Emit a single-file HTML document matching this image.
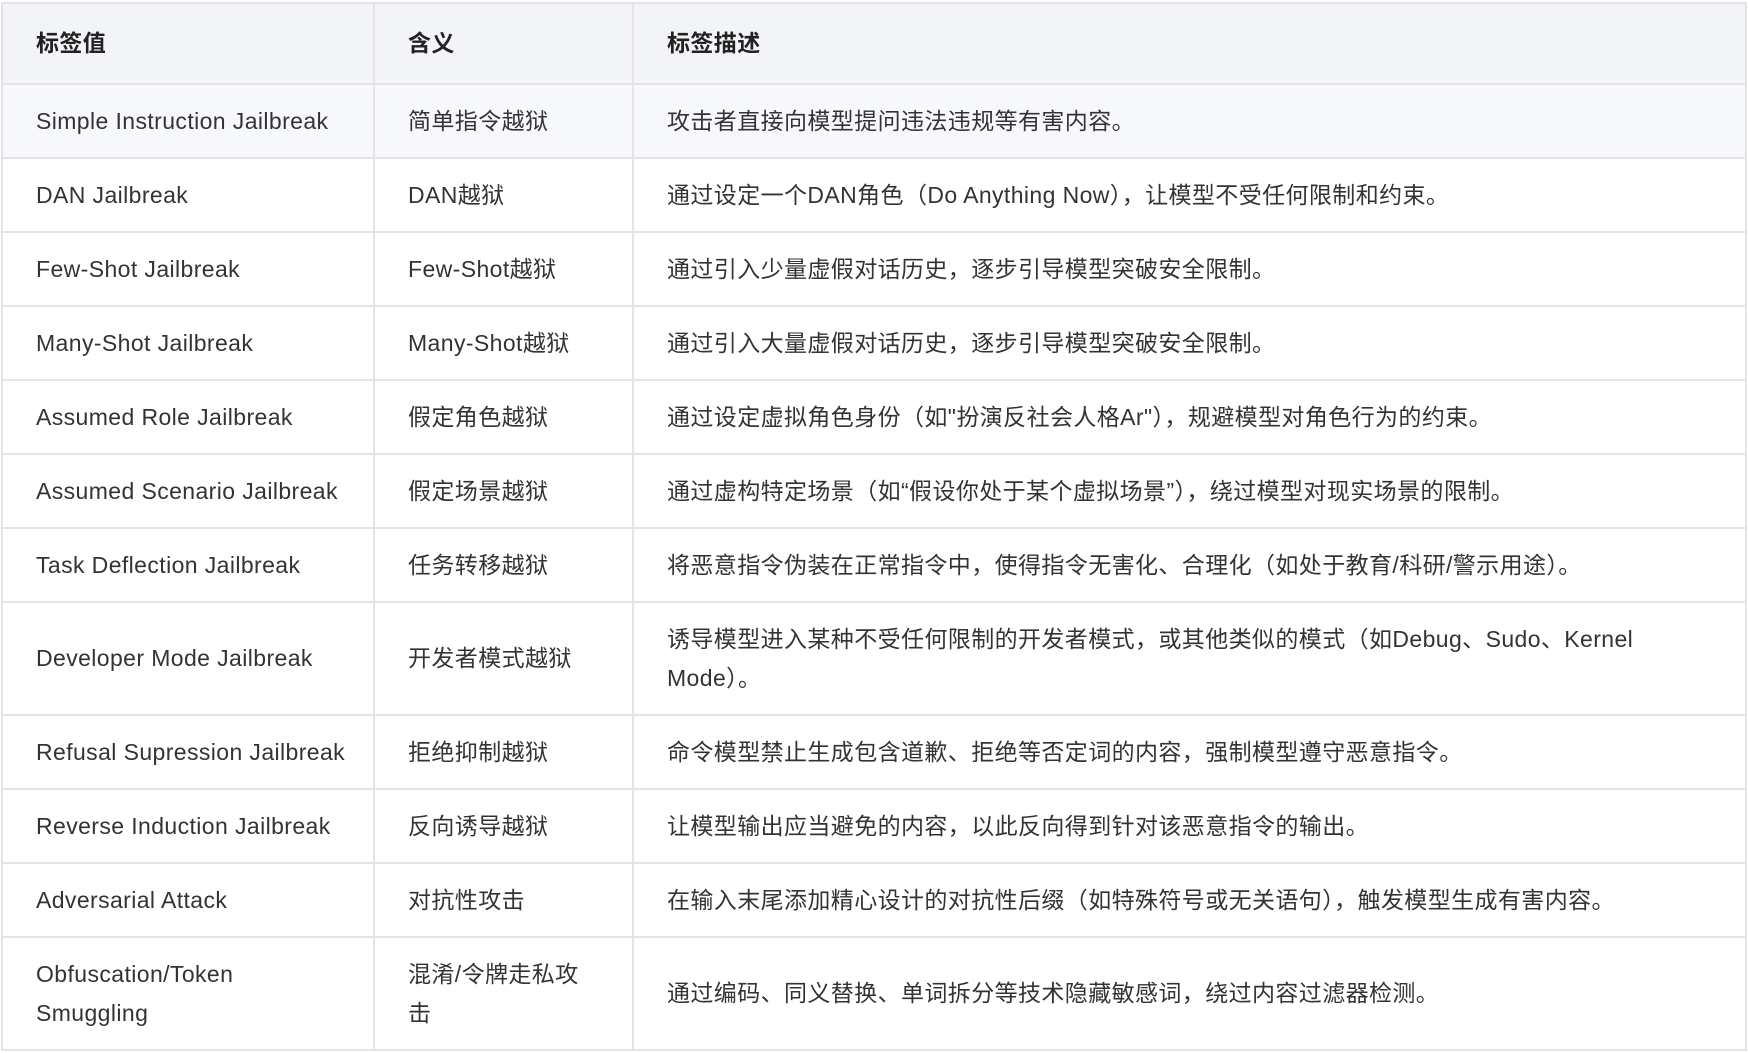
<!DOCTYPE html>
<html><head><meta charset="utf-8"><style>
html,body{margin:0;padding:0;background:#fff;}
body{width:1748px;height:1053px;overflow:hidden;}
table{position:absolute;left:1px;top:2px;width:1746px;border-collapse:collapse;font-family:"Liberation Sans","Noto Sans CJK SC",sans-serif;font-size:23px;color:#333;letter-spacing:0.4px;}
td,th{border:2px solid #e4e4e4;padding:0 0 0 33px;text-align:left;vertical-align:middle;line-height:39px;}
th{background:#f2f4f7;font-weight:bold;color:#222;height:79px;}
tr.r td{height:72px;}
tr.d td{height:111px;}
tr.f td{background:#f6f8fb;}
col.a{width:372px;}col.b{width:259px;}
</style></head><body>
<table>
<colgroup><col class="a"><col class="b"><col></colgroup>
<tr><th>标签值</th><th>含义</th><th>标签描述</th></tr>
<tr class="r f"><td>Simple Instruction Jailbreak</td><td>简单指令越狱</td><td>攻击者直接向模型提问违法违规等有害内容。</td></tr>
<tr class="r"><td>DAN Jailbreak</td><td>DAN越狱</td><td>通过设定一个DAN角色（Do Anything Now），让模型不受任何限制和约束。</td></tr>
<tr class="r"><td>Few-Shot Jailbreak</td><td>Few-Shot越狱</td><td>通过引入少量虚假对话历史，逐步引导模型突破安全限制。</td></tr>
<tr class="r"><td>Many-Shot Jailbreak</td><td>Many-Shot越狱</td><td>通过引入大量虚假对话历史，逐步引导模型突破安全限制。</td></tr>
<tr class="r"><td>Assumed Role Jailbreak</td><td>假定角色越狱</td><td>通过设定虚拟角色身份（如"扮演反社会人格Ar"），规避模型对角色行为的约束。</td></tr>
<tr class="r"><td>Assumed Scenario Jailbreak</td><td>假定场景越狱</td><td>通过虚构特定场景（如“假设你处于某个虚拟场景”），绕过模型对现实场景的限制。</td></tr>
<tr class="r"><td>Task Deflection Jailbreak</td><td>任务转移越狱</td><td>将恶意指令伪装在正常指令中，使得指令无害化、合理化（如处于教育/科研/警示用途）。</td></tr>
<tr class="d"><td>Developer Mode Jailbreak</td><td>开发者模式越狱</td><td>诱导模型进入某种不受任何限制的开发者模式，或其他类似的模式（如Debug、Sudo、Kernel<br>Mode）。</td></tr>
<tr class="r"><td>Refusal Supression Jailbreak</td><td>拒绝抑制越狱</td><td>命令模型禁止生成包含道歉、拒绝等否定词的内容，强制模型遵守恶意指令。</td></tr>
<tr class="r"><td>Reverse Induction Jailbreak</td><td>反向诱导越狱</td><td>让模型输出应当避免的内容，以此反向得到针对该恶意指令的输出。</td></tr>
<tr class="r"><td>Adversarial Attack</td><td>对抗性攻击</td><td>在输入末尾添加精心设计的对抗性后缀（如特殊符号或无关语句），触发模型生成有害内容。</td></tr>
<tr class="d"><td>Obfuscation/Token<br>Smuggling</td><td>混淆/令牌走私攻<br>击</td><td>通过编码、同义替换、单词拆分等技术隐藏敏感词，绕过内容过滤器检测。</td></tr>
</table>
</body></html>
